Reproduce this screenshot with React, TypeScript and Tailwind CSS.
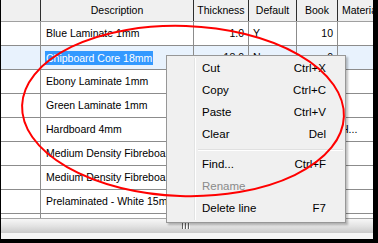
import React from "react";

type Row = {
  desc: string;
  thick?: string;
  def?: string;
  book?: string;
  mat?: string;
  selected?: boolean;
};

const rows: Row[] = [
  { desc: "Blue Laminate 1mm", thick: "1.0", def: "Y", book: "10" },
  { desc: "Chipboard Core 18mm", thick: "18.0", def: "N", book: "0", selected: true },
  { desc: "Ebony Laminate 1mm" },
  { desc: "Green Laminate 1mm" },
  { desc: "Hardboard 4mm", mat: "H..." },
  { desc: "Medium Density Fibreboard 12mm" },
  { desc: "Medium Density Fibreboard 18mm" },
  { desc: "Prelaminated - White 15mm" },
  { desc: "" },
];

type MenuItem = { label: string; key?: string; disabled?: boolean } | "sep";

const menu: MenuItem[] = [
  { label: "Cut", key: "Ctrl+X" },
  { label: "Copy", key: "Ctrl+C" },
  { label: "Paste", key: "Ctrl+V" },
  { label: "Clear", key: "Del" },
  "sep",
  { label: "Find...", key: "Ctrl+F" },
  { label: "Rename", disabled: true },
  { label: "Delete line", key: "F7" },
];

function GridRow({ row }: { row: Row }) {
  const bg = row.selected ? "bg-[#e8f2fd]" : "bg-white";
  return (
    <div className={`flex h-[24px] shrink-0 border-b border-[#8c8c8c] ${bg}`}>
      <div className="w-[40px] shrink-0 border-r border-[#8c8c8c]" />
      <div className="w-[153px] shrink-0 border-r border-[#8c8c8c] flex items-center pl-[4px] overflow-hidden whitespace-nowrap">
        {row.selected ? (
          <span className="bg-[#3399ff] text-white px-[1px] leading-[14px]">{row.desc}</span>
        ) : (
          <span className="pl-[1px]">{row.desc}</span>
        )}
      </div>
      <div className="w-[55px] shrink-0 border-r border-[#8c8c8c] flex items-center justify-end pr-[4px]">
        {row.thick}
      </div>
      <div className="w-[48px] shrink-0 border-r border-[#8c8c8c] flex items-center pl-[4px]">
        {row.def}
      </div>
      <div className="w-[41px] shrink-0 border-r border-[#8c8c8c] flex items-center justify-end pr-[4px]">
        {row.book}
      </div>
      <div className="w-[35px] shrink-0 flex items-center pl-[3px] overflow-hidden whitespace-nowrap">
        {row.mat}
      </div>
    </div>
  );
}

function ContextMenu() {
  return (
    <div className="absolute left-[166px] top-[55px] w-[180px] h-[168px] border border-[#979797] bg-[#f0f0f0] p-[2px] shadow-[2px_2px_2px_rgba(0,0,0,0.25)] text-[11.5px] text-black">
      <div className="absolute left-[27px] top-[2px] bottom-[2px] w-[2px] border-l border-[#e2e3e3] border-r border-r-white" />
      {menu.map((item, i) =>
        item === "sep" ? (
          <div key={i} className="h-[8px] flex flex-col justify-center pl-[29px]">
            <div className="h-[2px] border-t border-[#e0e0e0] border-b border-b-white" />
          </div>
        ) : (
          <div
            key={i}
            className={`relative h-[22px] flex items-center justify-between pl-[33px] pr-[17px] ${
              item.disabled ? "text-[#8a8a8a]" : ""
            }`}
          >
            <span>{item.label}</span>
            <span>{item.key}</span>
          </div>
        )
      )}
    </div>
  );
}

export default function App() {
  return (
    <div className="relative w-[378px] h-[243px] bg-black pl-[1px] pr-[5px] pb-[4px] overflow-hidden font-['Liberation_Sans',Arial,sans-serif] text-[10.5px] text-black">
      <div className="w-[372px] h-[239px] flex flex-col bg-[#f4f4f4]">
        <div className="h-[218px] shrink-0 overflow-hidden bg-white flex flex-col">
          <div className="flex h-[22px] shrink-0 border-b border-[#a0a0a0] bg-[#f0f0f0]">
            <div className="w-[40px] shrink-0 border-r border-[#2e2e2e]" />
            <div className="w-[153px] shrink-0 border-r border-[#2e2e2e] flex items-center justify-center">
              Description
            </div>
            <div className="w-[55px] shrink-0 border-r border-[#2e2e2e] flex items-center justify-center">
              Thickness
            </div>
            <div className="w-[48px] shrink-0 border-r border-[#2e2e2e] flex items-center justify-center">
              Default
            </div>
            <div className="w-[41px] shrink-0 border-r border-[#2e2e2e] flex items-center justify-center">
              Book
            </div>
            <div className="w-[35px] shrink-0 flex items-center pl-[4px] overflow-hidden whitespace-nowrap">
              Material
            </div>
          </div>
          {rows.map((r, i) => (
            <GridRow key={i} row={r} />
          ))}
        </div>
        <div className="h-[15px] shrink-0 border-t border-[#a5a5a5] bg-linear-to-b from-[#f7f7f7] via-[#e3e3e3] to-[#cacaca] flex items-center pl-[181px]">
          <div className="flex gap-[1px]">
            <div className="w-[1px] h-[6px] bg-[#5f5f5f] shadow-[1px_0_0_#ffffff]" />
            <div className="w-[1px] h-[6px] ml-[1px] bg-[#5f5f5f] shadow-[1px_0_0_#ffffff]" />
            <div className="w-[1px] h-[6px] ml-[1px] bg-[#5f5f5f] shadow-[1px_0_0_#ffffff]" />
          </div>
        </div>
        <div className="flex-1 bg-[#f6f6f6]" />
      </div>

      <ContextMenu />

      <svg className="absolute left-0 top-0 pointer-events-none" width="378" height="243" viewBox="0 0 378 243">
        <ellipse
          cx="183"
          cy="111"
          rx="161"
          ry="85"
          transform="rotate(2 183 111)"
          fill="none"
          stroke="#ff0000"
          strokeWidth="2"
        />
      </svg>
    </div>
  );
}
